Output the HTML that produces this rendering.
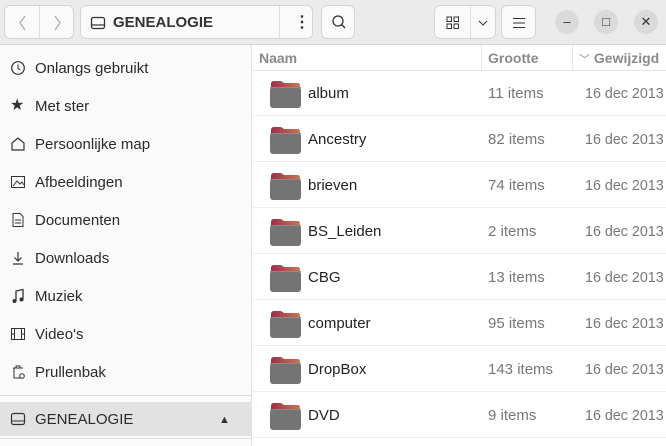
<!DOCTYPE html><html><head><style>
*{margin:0;padding:0;box-sizing:border-box}
body{width:666px;height:446px;overflow:hidden;font-family:"Liberation Sans",sans-serif;background:#fff;position:relative;color:#333}
.hb{position:absolute;left:0;top:0;width:666px;height:45px;background:#ebebeb;border-bottom:1px solid #d6d6d6}
.btn{position:absolute;top:5px;height:34px;background:#fafafa;border:1px solid #d4d4d4;border-radius:6px}
.side{position:absolute;left:0;top:45px;width:252px;height:401px;background:#fafafa;border-right:1px solid #e2e2e2}
.si{position:absolute;left:0;width:252px;height:34px;font-size:15px;color:#2a2a2a;line-height:36px;padding-left:35px}
.ic{position:absolute;left:10px;top:9px;width:16px;height:16px}
.main{position:absolute;left:253px;top:45px;width:413px;height:401px}
.ch{position:absolute;top:0;height:26px;line-height:27px;font-weight:bold;color:#8a8a8a;font-size:14px}
.row{position:absolute;left:0;width:413px;height:46px;border-bottom:1px solid #ececec;font-size:15px;line-height:48px}
.f{position:absolute;left:16px;top:10px;width:32px;height:28px}
.n{position:absolute;left:55px;color:#222}
.s{position:absolute;left:235px;color:#777}
.d{position:absolute;left:332px;color:#777;white-space:nowrap;font-size:14.3px}
.wc{position:absolute;top:10px;width:24px;height:24px;border-radius:12px;background:#dadada;text-align:center;line-height:24px;font-size:13px;color:#333}
</style></head><body>
<div class="hb">
<div class="btn" style="left:4px;width:70px"><div style="position:absolute;left:34px;top:0;width:1px;height:32px;background:#ddd"></div>
<svg style="position:absolute;left:13px;top:9px" width="10" height="16"><path d="M7 1L2 8L7 15" stroke="#aaa" fill="none" stroke-width="1.2"/></svg>
<svg style="position:absolute;left:47px;top:9px" width="10" height="16"><path d="M3 1L8 8L3 15" stroke="#aaa" fill="none" stroke-width="1.2"/></svg></div>
<div class="btn" style="left:80px;width:233px"><div style="position:absolute;left:198px;top:0;width:1px;height:32px;background:#ddd"></div>
<svg style="position:absolute;left:9px;top:9px" width="16" height="16"><rect x="1.5" y="2.5" width="13" height="11" rx="2" stroke="#333" fill="none" stroke-width="1.3"/><line x1="2" y1="10" x2="14" y2="10" stroke="#333" stroke-width="1.2"/></svg>
<span style="position:absolute;left:32px;top:8px;font-weight:bold;font-size:15px;color:#333">GENEALOGIE</span>
<span style="position:absolute;left:213px;top:6px;font-weight:bold;color:#333">⋮</span></div>
<div class="btn" style="left:321px;width:34px"><svg style="position:absolute;left:9px;top:8px" width="16" height="16"><circle cx="7" cy="7" r="5" stroke="#333" fill="none" stroke-width="1.3"/><line x1="10.5" y1="10.5" x2="14" y2="14" stroke="#333" stroke-width="1.4"/></svg></div>
<div class="btn" style="left:434px;width:62px"><div style="position:absolute;left:35px;top:0;width:1px;height:32px;background:#ddd"></div>
<svg style="position:absolute;left:11px;top:10px" width="14" height="14"><rect x="1" y="1" width="4.5" height="4.5" stroke="#333" fill="none"/><rect x="8" y="1" width="4.5" height="4.5" stroke="#333" fill="none"/><rect x="1" y="8" width="4.5" height="4.5" stroke="#333" fill="none"/><rect x="8" y="8" width="4.5" height="4.5" stroke="#333" fill="none"/></svg>
<svg style="position:absolute;left:43px;top:13px" width="10" height="8"><path d="M1 2L5 6L9 2" stroke="#333" fill="none"/></svg></div>
<div class="btn" style="left:501px;width:35px"><svg style="position:absolute;left:10px;top:11px" width="14" height="12"><path d="M1 1.5H13M1 6H13M1 10.5H13" stroke="#333"/></svg></div>
<div class="wc" style="left:555px">–</div><div class="wc" style="left:594px">□</div><div class="wc" style="left:634px">✕</div>
</div>
<div class="side">
<div class="si" style="top:6px"><svg class="ic"><circle cx="8" cy="8" r="6.3" stroke="#333" fill="none" stroke-width="1.2"/><path d="M8 4.5V8.5L10.5 10" stroke="#333" fill="none"/></svg>Onlangs gebruikt</div>
<div class="si" style="top:44px"><span class="ic" style="font-size:16px;line-height:16px;color:#333">★</span>Met ster</div>
<div class="si" style="top:82px"><svg class="ic"><path d="M8 2L2 7V14H14V7Z" stroke="#333" fill="none" stroke-width="1.2"/></svg>Persoonlijke map</div>
<div class="si" style="top:120px"><svg class="ic"><rect x="1.5" y="2.5" width="13" height="11" stroke="#333" fill="none"/><path d="M3 12L7 7L10 10L12 8L14 11" stroke="#333" fill="none"/></svg>Afbeeldingen</div>
<div class="si" style="top:158px"><svg class="ic"><path d="M3 1.5H10L13 4.5V14.5H3Z" stroke="#333" fill="none"/><path d="M5 8H11M5 11H11" stroke="#333"/></svg>Documenten</div>
<div class="si" style="top:196px"><svg class="ic"><path d="M8 2V11M4.5 7.5L8 11L11.5 7.5M3 14H13" stroke="#333" fill="none" stroke-width="1.2"/></svg>Downloads</div>
<div class="si" style="top:234px"><svg class="ic"><path d="M6 13V3L13 1.5V11.5" stroke="#333" fill="none" stroke-width="1.3"/><circle cx="4.5" cy="13" r="2" fill="#333"/><circle cx="11.5" cy="11.5" r="2" fill="#333"/></svg>Muziek</div>
<div class="si" style="top:272px"><svg class="ic"><rect x="1.5" y="2.5" width="13" height="11" stroke="#333" fill="none"/><path d="M4.5 2.5V13.5M11.5 2.5V13.5M1.5 8H4.5M11.5 8H14.5" stroke="#333"/></svg>Video's</div>
<div class="si" style="top:310px"><svg class="ic"><path d="M3 4H13M6 4V2H10V4M4 4.5V14H11" stroke="#333" fill="none"/><circle cx="12" cy="12" r="2.3" stroke="#333" fill="none"/></svg>Prullenbak</div>
<div style="position:absolute;left:0;top:350px;width:252px;height:1px;background:#dcdcdc"></div>
<div class="si" style="top:357px;background:#e2e2e2"><svg class="ic"><rect x="1.5" y="2.5" width="13" height="11" rx="2" stroke="#333" fill="none" stroke-width="1.2"/><line x1="2" y1="10" x2="14" y2="10" stroke="#333"/></svg>GENEALOGIE<span style="position:absolute;left:219px;font-size:11px;color:#333">▲</span></div>
<div style="position:absolute;left:0;top:393px;width:252px;height:1px;background:#dcdcdc"></div>
</div>
<div class="main">
<div style="position:absolute;left:0;top:0;width:413px;height:26px;border-bottom:1px solid #e6e6e6"></div>
<div class="ch" style="left:6px">Naam</div>
<div style="position:absolute;left:228px;top:0;width:1px;height:26px;background:#e6e6e6"></div>
<div class="ch" style="left:235px">Grootte</div>
<div style="position:absolute;left:319px;top:0;width:1px;height:26px;background:#e6e6e6"></div>
<div class="ch" style="left:326px;white-space:nowrap"><span style="font-weight:normal;font-size:11px">﹀</span> Gewijzigd</div>
<div id="rows"></div>
</div>
<script>
var d=[["album","11 items"],["Ancestry","82 items"],["brieven","74 items"],["BS_Leiden","2 items"],["CBG","13 items"],["computer","95 items"],["DropBox","143 items"],["DVD","9 items"]];
var h="";d.forEach(function(r,i){h+='<div class="row" style="top:'+(25+i*46)+'px"><svg class="f" viewBox="0 0 32 28"><defs><linearGradient id="g'+i+'"><stop offset="0" stop-color="#9c2f4c"/><stop offset="1" stop-color="#c9774f"/></linearGradient></defs><path d="M2 4Q2 1 5 1H12L15 3H29Q31 3 31 6V12H2Z" fill="url(#g'+i+')"/><rect x="1" y="7" width="31" height="21" rx="3" fill="#747474"/><rect x="1" y="7" width="31" height="1" fill="#8a8a8a"/></svg><span class="n">'+r[0]+'</span><span class="s">'+r[1]+'</span><span class="d">16 dec 2013</span></div>'});
document.getElementById("rows").innerHTML=h;
</script>
</body></html>
